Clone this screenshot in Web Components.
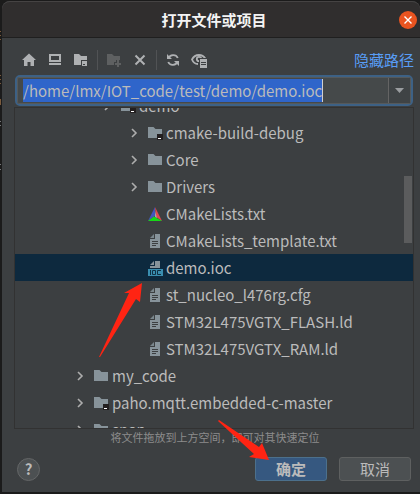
<!DOCTYPE html>
<html lang="zh-CN">
<head>
<meta charset="utf-8">
<title>打开文件或项目</title>
<style>
html, body { margin: 0; height: 100%; }
body {
  background: #1b1b1b; color: #bbbbbb; overflow: hidden;
  font: 15px/27px "Noto Sans CJK SC", "Noto Sans", sans-serif;
}
</style>
</head>
<body>
<open-dialog></open-dialog>

<script>
const ICONS = {
  home: '<path fill="#afb1b3" d="M8 1.500 15 8h-2v6H9.500V10h-3v4H3V8H1z"/>',
  desktop: '<path fill="#afb1b3" fill-rule="evenodd" d="M2 2h12v8H2zM4 4v4h8V4zM2 11h12v2H2z"/>',
  project: '<path fill="#afb1b3" d="M1 2h5l2 2h6v4H8v5H1z"/><path fill="#afb1b3" fill-rule="evenodd" d="M9 9h5v5H9zM10 12v1h2v-1z"/>',
  newfolder: '<path fill="#5e6061" d="M1 2h5l2 2h6v4h-4v2H8v3H1z"/><path fill="#5e6061" d="M11 8h2v3h2v2h-2v2h-2v-2H9v-2h2z"/>',
  remove: '<path stroke="#afb1b3" stroke-width="2" d="M3.500 3.500l9 9M12.500 3.500l-9 9"/>',
  refresh: '<g fill="none" stroke="#afb1b3" stroke-width="1.800"><path d="M3.500 6.500A5 5 0 0 1 12.800 6M12.500 9.500A5 5 0 0 1 3.200 10"/></g><path fill="#afb1b3" d="M2 2v5h5zM14 14V9H9z"/>',
  hidden: '<g fill="none" stroke="#afb1b3" stroke-width="1.800"><path d="M7 12C4 12 2 10 1 7.500 2.500 4.500 5 3 8 3s5 1.500 6.300 3.500"/><circle cx="8" cy="7" r="2.200"/></g><path fill="#3c3f41" d="M8 6h8v10H8z"/><path fill="#afb1b3" fill-rule="evenodd" d="M9 7h7v9H9zM10 10v1h5v-1zM10 12v1h5v-1z"/>',
  folder: '<path fill="#87939a" d="M1 2h5.500l2 2H15v9H1z"/>',
  module: '<path fill="#87939a" d="M1 2h5.500l2 2H15v9H1z"/><path fill="#231f20" d="M10 9h6v6h-6z"/><path fill="#fff" d="M11 13h3v1h-3z"/>',
  text: '<path fill="#87939a" fill-rule="evenodd" d="M8 1h5v14H3V6h5zM5 8v1h6V8zM5 10v1h6v-1zM5 12v1h4v-1z"/><path fill="#7a868c" d="M7 1v4H3z"/>',
  cmake: '<path fill="#4354bd" d="M8 1 1 15l7-5z"/><path fill="#e0484e" d="M8 1l7 14-6-4z"/><path fill="#17d717" d="M1 15l6-4.500 8 4.500z"/><path fill="#a5a5ad" d="M8 5v6l2 1z"/>',
  ioc: '<path fill="#87939a" d="M8 1h5v7H3V6h5zM7 1v4H3z"/><path fill="#3a8eb0" d="M1 9h15v7H1z"/><path fill="none" stroke="#103044" d="M3.500 10v5M5.500 10.500h3v4h-3zM14 10.500h-3.500v4H14"/>'
};
const icon = (name) => `<svg viewBox="0 0 16 16" width="16" height="16" aria-hidden="true">${ICONS[name]}</svg>`;

const define = (name, html, setup) => customElements.define(name, class extends HTMLElement {
  constructor() {
    super();
    this.attachShadow({ mode: 'open' }).innerHTML = html;
  }
  connectedCallback() { if (setup) setup(this, this.shadowRoot); }
});

define('dialog-title', `
<style>
:host { display: grid; grid-template-columns: 1fr auto 1fr; align-items: center; height: 37px;
  background: #302e2e; border-bottom: 1px solid #1f1f1f; border-top: 1px solid #454343; box-sizing: border-box;
  border-radius: 8px 8px 0 0; padding: 0 3px 0 9px; }
h1 { grid-column: 2; margin: 0; font-size: 15px; line-height: 24px; font-weight: 700; color: #f4f4f4; }
button { justify-self: end; width: 18px; height: 18px; padding: 0; border: 0; border-radius: 50%; background: #e95420; display: grid; place-items: center; }
</style>
<h1><slot></slot></h1>
<button aria-label="关闭"><svg width="8" height="8" viewBox="0 0 8 8"><path d="M.5.5l7 7M7.500.5l-7 7" stroke="#fff" stroke-width="1.400"/></svg></button>`);

define('tool-button', `
<style>
:host { display: block; }
button { display: block; width: 16px; height: 16px; padding: 0; border: 0; background: none; }
svg { display: block; }
</style><button></button>`, (el, root) => {
  const b = root.querySelector('button');
  b.innerHTML = icon(el.getAttribute('icon'));
  b.setAttribute('aria-label', el.getAttribute('label'));
  b.disabled = el.hasAttribute('disabled');
});

define('tool-bar', `
<style>
:host { display: flex; align-items: center; height: 37px; padding: 7px 6px 0 19px; box-sizing: border-box; }
.tools { display: flex; align-items: center; gap: 10px; }
i { width: 1px; height: 20px; background: #515355; margin: 0 -2px; }
a { margin-left: auto; color: #589df6; text-decoration: none; font-size: 15px; line-height: 24px; }
</style>
<div class="tools">
<tool-button icon="home" label="主目录"></tool-button>
<tool-button icon="desktop" label="桌面"></tool-button>
<tool-button icon="project" label="项目目录"></tool-button><i></i>
<tool-button icon="newfolder" label="新建文件夹" disabled></tool-button>
<tool-button icon="remove" label="删除"></tool-button><i></i>
<tool-button icon="refresh" label="刷新"></tool-button>
<tool-button icon="hidden" label="显示隐藏文件"></tool-button>
</div>
<a href="#">隐藏路径</a>`);

define('path-field', `
<style>
:host { display: flex; height: 31px; box-sizing: border-box; margin: 0 7px 0 13px; border: 2px solid #3d6185; border-radius: 5px; background: #45494a; }
.inner { flex: 1; min-width: 0; display: flex; align-items: center; border: 1px solid #55595b; border-radius: 2px; padding-left: 5px; }
input { field-sizing: content; min-width: 0; height: 23px; padding: 0; border: 0; outline: 0; background: #2f65ca; color: #bbbbbb; font: inherit; line-height: 23px; }
.caret { width: 1px; height: 23px; background: #d0d0d0; }
button { margin-left: auto; width: 22px; align-self: stretch; padding: 0; border: 0; border-left: 1px solid #646464; background: #3f4345; display: grid; place-items: center; }
</style>
<div class="inner"><input aria-label="路径" value="/home/lmx/IOT_code/test/demo/demo.ioc"><span class="caret"></span>
<button aria-label="历史记录"><svg width="9" height="5"><path d="M0 0h9L4.500 5z" fill="#9a9da0"/></svg></button></div>`);

define('tree-row', `
<style>
:host { display: flex; align-items: center; height: 27px; white-space: nowrap; padding-left: calc(6px + var(--level) * 27px); }
:host([selected]) { background: #0d293e; }
button { width: 10px; height: 16px; padding: 0; border: 0; background: none; margin-right: 8px; }
svg { display: block; flex: none; }
:host([leaf]) button { visibility: hidden; }
span { margin-left: 3px; }
</style>
<button aria-label="展开"><svg width="10" height="16"><path d="M3 4l4 4-4 4" fill="none" stroke="#adadad" stroke-width="1.600"/></svg></button>
<div></div><span><slot></slot></span>`, (el, root) => {
  el.style.setProperty('--level', el.getAttribute('level'));
  el.setAttribute('role', 'treeitem');
  root.querySelector('div').innerHTML = icon(el.getAttribute('icon'));
});

define('file-tree', `
<style>
:host { display: flex; flex: 1; min-height: 0; margin: 1px 6px 0 12px; border: 1px solid #323232; overflow: hidden; }
.list { flex: 1; min-width: 0; margin-top: -16px; }
.bar { display: grid; grid-template-rows: 68fr 67fr 185fr; width: 8px; margin: 0 1px 0 -9px; }
.bar i { grid-row: 2; background: #5b5c5d; }
</style>
<div class="list" role="tree"><slot></slot></div><div class="bar"><i></i></div>`);

define('push-button', `
<style>
:host { display: block; }
button { display: block; width: 72px; height: 24px; padding: 0; border: 1px solid #5e6060; border-radius: 3px; background: #4c5052; color: #bbbbbb; font: inherit; font-size: 15px; line-height: 22px; }
:host([primary]) button { background: #365880; border-color: #4c708c; font-weight: 700; }
</style><button><slot></slot></button>`);

define('dialog-footer', `
<style>
:host { display: block; }
p { margin: 0; text-align: center; font-size: 11px; line-height: 16px; color: #8c8c8c; padding-left: 8px; }
.row { display: flex; align-items: center; gap: 12px; padding: 12px 9px 11px 15px; }
.help { width: 23px; height: 23px; margin-right: auto; padding: 0; border: 1px solid #646667; border-radius: 50%; background: #4c5052; color: #bbbbbb; font: 700 15px/20px "Noto Sans CJK SC", sans-serif; }
</style>
<p>将文件拖放到上方空间，即可对其快速定位</p>
<div class="row"><button class="help" aria-label="帮助">?</button>
<push-button primary>确定</push-button><push-button>取消</push-button></div>`);

define('pointer-arrow', `
<style>
:host { position: absolute; pointer-events: none; }
svg { display: block; overflow: visible; }
</style><svg width="1" height="1"><polygon fill="#ff2413"/></svg>`, (el, root) => {
  root.querySelector('polygon').setAttribute('points', el.getAttribute('points'));
});

define('open-dialog', `
<style>
:host { display: flex; flex-direction: column; position: relative; height: 100vh; box-sizing: border-box; padding: 1px 0 2px 2px;
  background: linear-gradient(#0000 31px, #7a5a3c 31px 32px, #0000 32px 35px, #7a5a3c 35px 36px, #0000 36px 39px, #7a5a3c 39px 40px,
    #0000 40px 75px, #7a5a3c 75px 76px, #0000 76px 79px, #7a5a3c 79px 80px, #0000 80px 83px, #7a5a3c 83px 84px,
    #0000 84px 99px, #7a5a3c 99px 105px, #0000 105px 121px, #77787a 121px 122px, #0000 122px 125px, #77787a 125px 126px,
    #0000 126px 164px, #77787a 164px 165px, #0000 165px 169px, #77787a 169px 170px, #0000 170px) 0 0 / 1px 100% no-repeat; }
section { flex: 1; min-height: 0; display: flex; flex-direction: column; background: #3c3f41; border-radius: 8px 8px 0 0; }
.first { left: 142px; top: 283px; }
.second { left: 269px; top: 460px; }
</style>
<section>
<dialog-title>打开文件或项目</dialog-title>
<tool-bar></tool-bar>
<path-field></path-field>
<file-tree>
<tree-row level="3" icon="module">demo</tree-row>
<tree-row level="4" icon="module">cmake-build-debug</tree-row>
<tree-row level="4" icon="folder">Core</tree-row>
<tree-row level="4" icon="folder">Drivers</tree-row>
<tree-row level="4" icon="cmake" leaf>CMakeLists.txt</tree-row>
<tree-row level="4" icon="text" leaf>CMakeLists_template.txt</tree-row>
<tree-row level="4" icon="ioc" leaf selected>demo.ioc</tree-row>
<tree-row level="4" icon="text" leaf>st_nucleo_l476rg.cfg</tree-row>
<tree-row level="4" icon="text" leaf>STM32L475VGTX_FLASH.ld</tree-row>
<tree-row level="4" icon="text" leaf>STM32L475VGTX_RAM.ld</tree-row>
<tree-row level="2" icon="folder">my_code</tree-row>
<tree-row level="2" icon="module">paho.mqtt.embedded-c-master</tree-row>
<tree-row level="2" icon="folder">snap</tree-row>
</file-tree>
<dialog-footer></dialog-footer>
</section>
<pointer-arrow class="first" points="0,0 -18,10 -13,10 -43,74 -42,74 -6,16 -2,19"></pointer-arrow>
<pointer-arrow class="second" points="0,0 -20,-3 -15,-6 -51,-39 -50,-40 -10,-13 -7,-17"></pointer-arrow>`);
</script>
</body>
</html>
